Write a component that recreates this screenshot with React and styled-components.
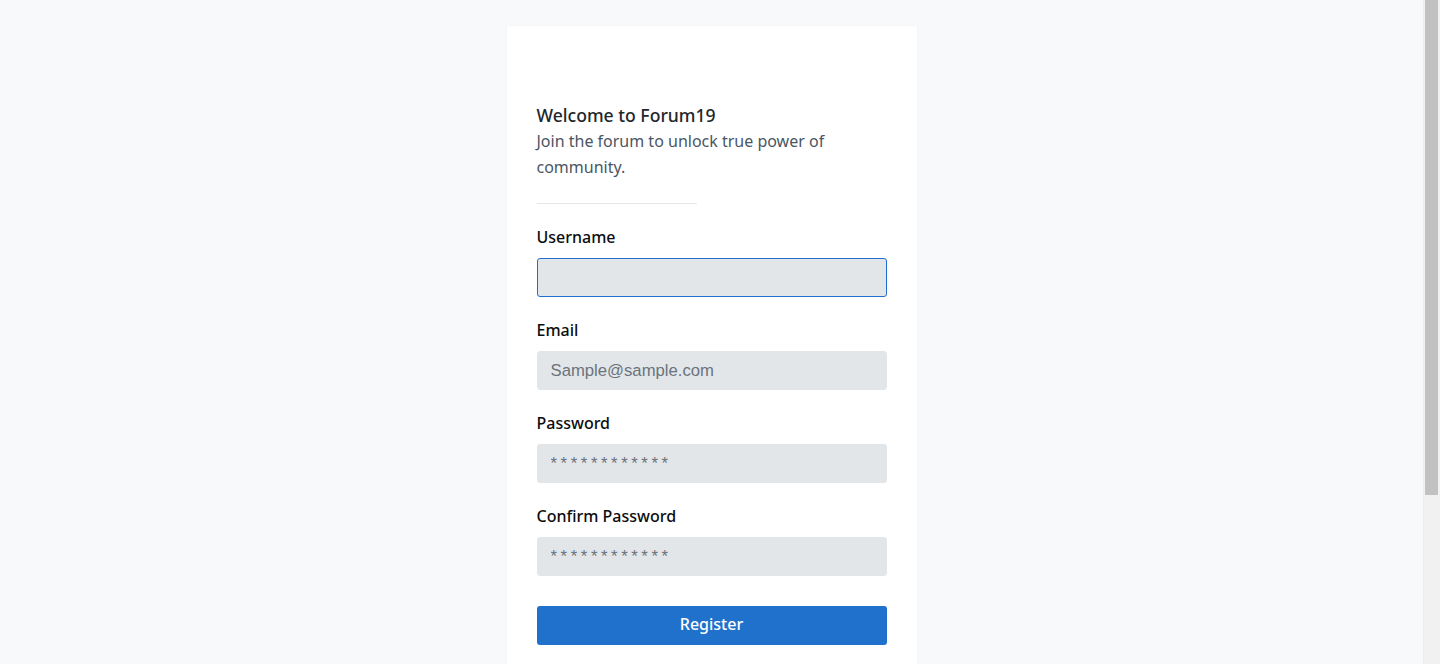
import React from "react";
import styled, { createGlobalStyle } from "styled-components";

const GlobalStyle = createGlobalStyle`
  html, body {
    margin: 0;
    padding: 0;
    background: #f8f9fa;
    font-family: "Noto Sans", "Open Sans", sans-serif;
  }
`;

// the reference shows a classic 17px scrollbar; headless hides the real one
const ScrollTrack = styled.div`
  position: fixed;
  top: 0;
  right: 0;
  bottom: 0;
  width: 17px;
  background: #f1f1f1;
  border-left: 1px solid #ededed;
  box-sizing: border-box;
`;

const ScrollThumb = styled.div`
  margin: 0 2px 0 1px;
  height: 495px;
  background: #c1c1c1;
`;

const Page = styled.div`
  display: flex;
  justify-content: center;
  padding: 26px 17px 26px 0;
`;

const Card = styled.div`
  width: 410px;
  box-sizing: border-box;
  background: #ffffff;
  padding: 76px 30px 218px;
  box-shadow: 0 0 2px rgba(0, 0, 0, 0.04);
`;

const Title = styled.h1`
  margin: 0;
  font-size: 17.6px;
  line-height: 26px;
  font-weight: 500;
  color: #232629;
`;

const Subtitle = styled.p`
  margin: 0;
  font-size: 16px;
  line-height: 26px;
  font-weight: 400;
  color: #4a5663;
`;

const Divider = styled.hr`
  width: 160px;
  margin: 23px 0 23px;
  border: none;
  border-top: 1px solid #e4e6e8;
`;

const Form = styled.form`
  display: flex;
  flex-direction: column;
  gap: 23px;
`;

const Field = styled.div`
  display: flex;
  flex-direction: column;
  gap: 11px;
`;

const Label = styled.label`
  font-size: 16px;
  line-height: 20px;
  font-weight: 500;
  color: #0c0d0e;
`;

const Input = styled.input`
  height: 39px;
  box-sizing: border-box;
  width: 100%;
  padding: 0 13px;
  font-family: "Liberation Sans", Arial, sans-serif;
  font-size: 16.7px;
  color: #232629;
  background: #e2e6e9;
  border: 1px solid ${(p) => (p.$focused ? "#1f6fd0" : "#e2e6e9")};
  border-radius: 3px;
  outline: none;
  caret-color: #232629;

  &::placeholder {
    color: #6a737c;
    letter-spacing: ${(p) => (p.$masked ? "3.6px" : "0")};
  }
`;

const Button = styled.button`
  margin-top: 7px;
  height: 39px;
  width: 100%;
  padding: 0 0 3px;
  border: none;
  border-radius: 3px;
  background: #1f71cc;
  color: #ffffff;
  font-family: "Noto Sans", "Open Sans", sans-serif;
  font-size: 16px;
  font-weight: 500;
  cursor: pointer;
`;

const fields = [
  { id: "username", label: "Username", placeholder: "", focused: true },
  { id: "email", label: "Email", placeholder: "Sample@sample.com" },
  { id: "password", label: "Password", placeholder: "************", masked: true },
  { id: "confirm", label: "Confirm Password", placeholder: "************", masked: true },
];

export default function App() {
  return (
    <>
      <GlobalStyle />
      <Page>
        <Card>
          <Title>Welcome to Forum19</Title>
          <Subtitle>Join the forum to unlock true power of community.</Subtitle>
          <Divider />
          <Form onSubmit={(e) => e.preventDefault()}>
            {fields.map((f) => (
              <Field key={f.id}>
                <Label htmlFor={f.id}>{f.label}</Label>
                <Input
                  id={f.id}
                  placeholder={f.placeholder}
                  $focused={f.focused}
                  $masked={f.masked}
                  autoFocus={f.focused}
                />
              </Field>
            ))}
            <Button type="submit">Register</Button>
          </Form>
        </Card>
      </Page>
      <ScrollTrack>
        <ScrollThumb />
      </ScrollTrack>
    </>
  );
}
